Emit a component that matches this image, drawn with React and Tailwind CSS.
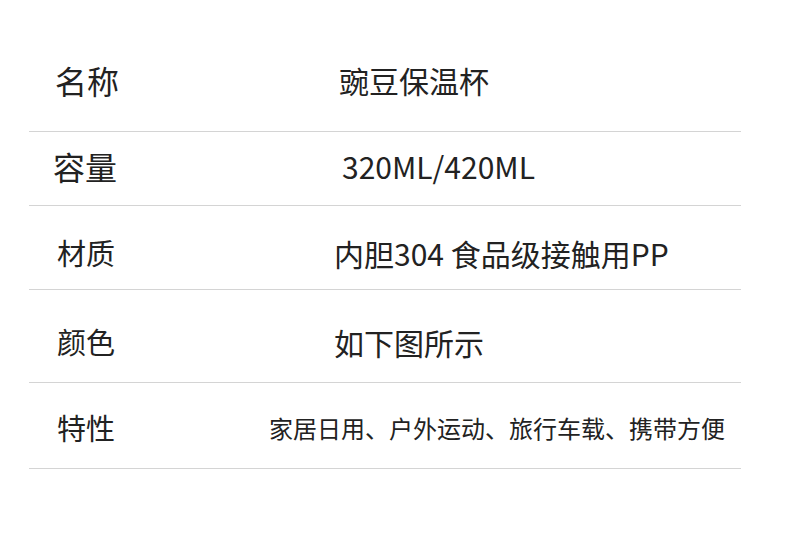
import React from 'react';

const rows = [
  { label: '名称', value: '豌豆保温杯', h: 'h-[99px] pb-[4px]', labelCls: 'text-[32px] pl-[26px]', valueCls: 'text-[30px] pl-[70px]' },
  { label: '容量', value: '320ML/420ML', h: 'h-[74px] pb-[6px]', labelCls: 'text-[32px] pl-[24px]', valueCls: 'text-[30px] pl-[73px]' },
  { label: '材质', value: '内胆304 食品级接触用PP', h: 'h-[84px] pt-[10px]', labelCls: 'text-[29px] pl-[28px]', valueCls: 'text-[30px] pl-[65px]' },
  { label: '颜色', value: '如下图所示', h: 'h-[93px] pt-[11px]', labelCls: 'text-[29px] pl-[28px]', valueCls: 'text-[30px] pl-[65px]' },
  { label: '特性', value: '家居日用、户外运动、旅行车载、携带方便', h: 'h-[86px] pt-[4px]', labelCls: 'text-[29px] pl-[28px]', valueCls: 'text-[24px] pl-0' },
];

const App = () => {
  return (
    <div
      className="w-[790px] h-[543px] bg-white pt-[33px] text-[#222]"
      style={{ fontFamily: '"Noto Sans CJK SC", "Noto Sans", sans-serif' }}
    >
      <div className="ml-[29px] w-[712px]">
        {rows.map((r) => (
          <div key={r.label} className={`flex items-center border-b border-[#d4d4d4] ${r.h}`}>
            <div className={`w-[240px] shrink-0 leading-none whitespace-nowrap ${r.labelCls}`}>{r.label}</div>
            <div className={`leading-none whitespace-nowrap ${r.valueCls}`}>{r.value}</div>
          </div>
        ))}
      </div>
    </div>
  );
};

export default App;
